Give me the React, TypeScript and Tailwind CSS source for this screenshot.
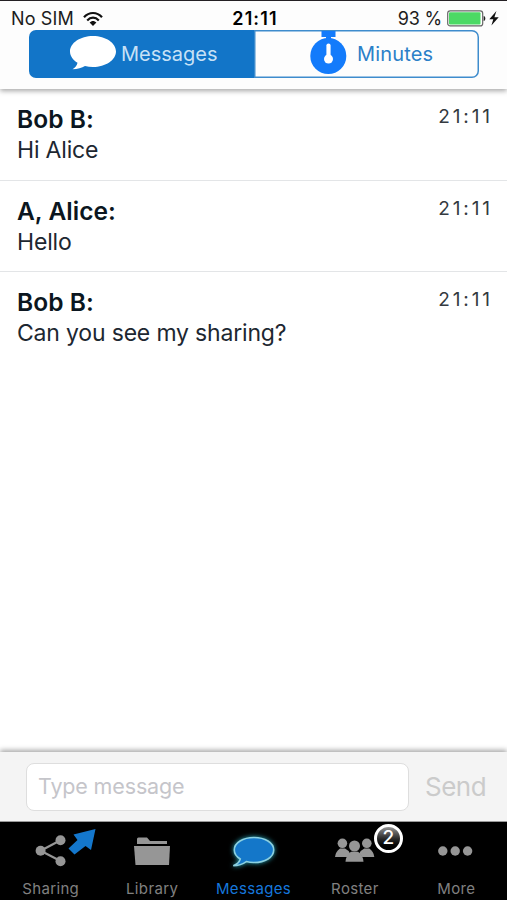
import type { ReactNode } from "react"

interface Message {
  author: string
  text: string
  time: string
}

const messages: Message[] = [
  { author: "Bob B:", text: "Hi Alice", time: "21:11" },
  { author: "A, Alice:", text: "Hello", time: "21:11" },
  { author: "Bob B:", text: "Can you see my sharing?", time: "21:11" },
]

function StatusBar() {
  return (
    <div className="flex h-[29px] items-center justify-between pt-[6px] pr-[8px] pl-[11px] text-[18px] leading-6 text-[#1c1c1c]">
      <div className="flex w-[170px] items-center gap-[9px]">
        <span className="tracking-[0.15px]">No SIM</span>
        <svg width="20" height="16" viewBox="0 0 20 16" fill="none" stroke="#111" strokeWidth="2.2">
          <path d="M1 6.200C6 .6 14 .6 19 6.200" />
          <path d="M4.200 9.400c3.400-3.600 8.200-3.600 11.600 0" />
          <path d="M6.600 11.600c2-2.100 4.800-2.100 6.800 0L10 15z" fill="#111" stroke="none" />
        </svg>
      </div>
      <span className="font-semibold tracking-[1.100px] text-black">21:11</span>
      <div className="flex w-[170px] items-center justify-end">
        <span className="mr-[5px] tracking-[-0.2px] whitespace-nowrap">93 %</span>
        <svg width="39" height="17" viewBox="0 0 39 17">
          <rect x=".7" y=".9" width="35" height="15" rx="2.500" fill="#fff" stroke="#666" strokeWidth="1.200" />
          <rect x="2" y="2.200" width="31.500" height="12.400" rx="1" fill="#4cd964" />
          <path d="M36.700 6c2.200.4 2.200 4.600 0 5z" fill="#222" />
        </svg>
        <svg className="ml-[3px]" width="10" height="15" viewBox="0 0 10 15">
          <path d="M7.400 0 .3 8.200h4L2.400 14.600 9.700 6.300H5.400z" fill="#111" />
        </svg>
      </div>
    </div>
  )
}

function SegmentedControl() {
  return (
    <div className="mr-[28px] ml-[29px] flex h-[48px] text-[20px]">
      <div className="flex w-[225px] items-center rounded-l-[7px] bg-[#1275c8] pl-[39px] text-[#c7e1f6]">
        <svg width="48" height="36" viewBox="0 0 48 36" fill="#fff">
          <path d="M25 0C12.300 0 2 7 2 15.500c0 4.500 3 8.500 7.500 11.300-.5 2.700-2.500 5-5 6.400 5 0 9.500-1.200 12.500-3.200 2.500.6 5.200 1 8 1 12.700 0 23-7 23-15.500S37.700 0 25 0z" />
        </svg>
        <span className="ml-[5px] tracking-[0px]">Messages</span>
      </div>
      <div className="flex flex-1 items-start rounded-r-[7px] pl-[55px] text-[#2b80c8] shadow-[inset_0_0_0_1.5px_#3e8ccd]">
        <svg width="38" height="45" viewBox="0 0 38 45">
          <path d="M12.500 1h14v6H22v4h-5V7h-4.500z" fill="#137bfb" />
          <circle cx="19.300" cy="26" r="18" fill="#137bfb" />
          <path d="M19.500 15.500v12" stroke="#fff" strokeWidth="4.200" strokeLinecap="round" />
          <circle cx="19.500" cy="29" r="4.500" fill="#fff" />
        </svg>
        <span className="mt-[9px] ml-[10px] tracking-[0.15px]">Minutes</span>
      </div>
    </div>
  )
}

function MessageRow({ author, text, time }: Message) {
  return (
    <div className="flex h-[91.500px] justify-between border-b border-[#e3e5e7] px-[17px] pt-[15px]">
      <div className="text-[#1d2731]">
        <div className="text-[24.500px] leading-[31px] font-semibold tracking-[0.05px] text-[#0b1620]">{author}</div>
        <div className="text-[23px] leading-[31px] tracking-[-0.18px]">{text}</div>
      </div>
      <div className="-mr-[3px] text-[19px] leading-[25px] tracking-[2.900px] text-[#343a40]">{time}</div>
    </div>
  )
}

function Composer() {
  return (
    <div className="relative flex h-[70px] items-center border-b border-[#999] bg-[#f4f4f4] pl-[26px] shadow-[0_-2px_5px_rgba(0,0,0,0.35)]">
      <div className="flex h-[48px] w-[383px] items-center rounded-[8px] border border-[#dedede] bg-white pl-[11px] text-[21.500px] tracking-[-0.15px] text-[#c5c5ca]">
        Type message
      </div>
      <span className="ml-[16px] text-[26px] tracking-[-0.5px] text-[#cbcbcb]">Send</span>
    </div>
  )
}

interface TabProps {
  label: string
  active?: boolean
  children: ReactNode
}

function Tab({ label, active, children }: TabProps) {
  return (
    <div className={active ? "flex flex-1 flex-col items-center text-[#1677dc]" : "flex flex-1 flex-col items-center text-[#808080]"}>
      <div className="flex h-[57px] items-start justify-center">{children}</div>
      <span className="text-[15px] leading-[20px] tracking-[0.35px]">{label}</span>
    </div>
  )
}

function TabBar() {
  return (
    <div className="flex h-[78px] bg-black">
      <Tab label="Sharing">
        <svg width="100" height="56" viewBox="0 0 100 56">
          <path d="M59.500 18.300 39.600 28.700 59.500 39" fill="none" stroke="#969696" strokeWidth="2.200" />
          <g fill="#969696">
            <circle cx="59.500" cy="18.300" r="5" />
            <circle cx="39.600" cy="28.700" r="5" />
            <circle cx="59.500" cy="39.200" r="5" />
          </g>
          <path d="M94.500 7 90 28 84.500 24 73.500 32.500 67.500 26.500 76.500 18 72.500 12.500z" fill="#1477cc" />
        </svg>
      </Tab>
      <Tab label="Library">
        <svg width="100" height="56" viewBox="0 0 100 56" fill="#969696">
          <path d="M35 22V17q0-1.500 1.500-1.500h8.500l3 3.500h17v3z" />
          <path d="M32 24h36l-1 19H33.500z" />
        </svg>
      </Tab>
      <Tab label="Messages" active>
        <svg width="60" height="56" viewBox="0 0 60 56">
          <path
            d="M30 15.500C19 15.500 10.300 20.800 10.300 28c0 3.600 2.300 6.800 6 9-.8 2.700-3.800 5.500-7 6.800 5-.2 9.500-1.700 13-4.200 2.300.6 5 .9 7.700.9 11 0 19.700-5.300 19.700-12.500S41 15.500 30 15.500z"
            fill="#1477c9"
            stroke="#8cd0e0"
            strokeWidth="1.600"
            className="drop-shadow-[0_0_2.5px_#27a4b8]"
          />
        </svg>
      </Tab>
      <Tab label="Roster">
        <div className="relative">
          <svg width="60" height="56" viewBox="0 0 60 56" fill="#969696">
            <circle cx="17.400" cy="21.300" r="4.800" />
            <circle cx="41.800" cy="21.300" r="4.800" />
            <path d="M10 35q.5-5.500 5-8.500h5q4 2 5 5L22 35zM49.300 35q-.5-5.500-5-8.500h-5q-4 2-5 5l3 3.500z" />
            <circle cx="29.500" cy="24" r="5.500" />
            <path d="M20.500 39.800q.5-6.800 5.500-10h7q5 3.200 5.500 10z" />
          </svg>
          <div className="absolute top-[2px] left-[49px] flex size-[29px] items-center justify-center rounded-full border-[3px] border-white bg-linear-to-b from-[#969696] via-[#222] via-55% to-black text-[19px] font-medium text-white">
            2
          </div>
        </div>
      </Tab>
      <Tab label="More">
        <svg width="60" height="56" viewBox="0 0 60 56" fill="#969696">
          <circle cx="16.800" cy="29" r="4.700" />
          <circle cx="29.200" cy="29" r="4.700" />
          <circle cx="41.600" cy="29" r="4.700" />
        </svg>
      </Tab>
    </div>
  )
}

export default function App() {
  return (
    <div className="flex h-[900px] w-[507px] flex-col overflow-hidden bg-white font-['Inter',sans-serif]">
      <header className="relative h-[89px] border-t border-[#242024] bg-[#fdfdfd] shadow-[0_2px_5px_rgba(0,0,0,0.35)]">
        <StatusBar />
        <SegmentedControl />
      </header>
      <main className="flex-1">
        {messages.slice(0, 2).map((message, i) => (
          <MessageRow key={i} {...message} />
        ))}
        <div className="[&>div]:border-b-0">
          <MessageRow {...messages[2]} />
        </div>
      </main>
      <Composer />
      <TabBar />
    </div>
  )
}
